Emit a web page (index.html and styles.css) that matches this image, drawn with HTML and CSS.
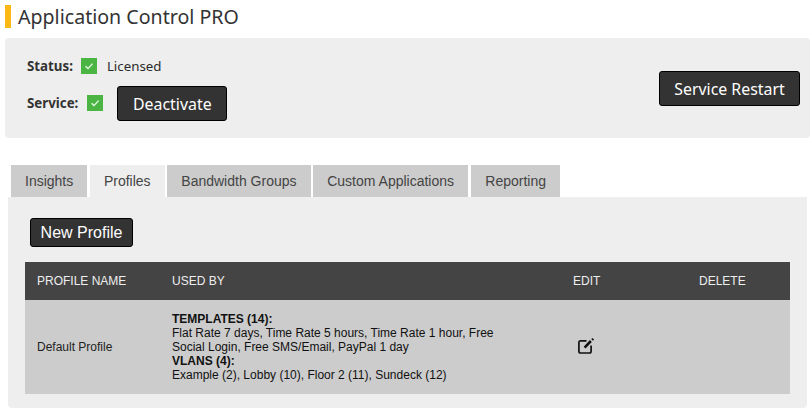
FILE: index.html
```html
<!DOCTYPE html>
<html lang="en">
<head>
<meta charset="utf-8">
<title>Application Control PRO</title>
<link rel="stylesheet" href="styles.css">
</head>
<body>
<h1 class="title">Application Control PRO</h1>
<section class="status-panel">
  <div class="status-rows">
    <div class="status-row licensed">
      <span class="label">Status:</span>
      <svg class="check" viewBox="0 0 16 16" width="16" height="16"><rect width="16" height="16" fill="#4bb543"/><path d="M4.5 8.2 7 10.6 11.6 5.6" fill="none" stroke="#e8f6e6" stroke-width="1.4"/></svg>
      <span class="value">Licensed</span>
    </div>
    <div class="status-row service">
      <span class="label">Service:</span>
      <svg class="check" viewBox="0 0 16 16" width="16" height="16"><rect width="16" height="16" fill="#4bb543"/><path d="M4.5 8.2 7 10.6 11.6 5.6" fill="none" stroke="#e8f6e6" stroke-width="1.4"/></svg>
      <button class="btn btn-large deactivate">Deactivate</button>
    </div>
  </div>
  <button class="btn btn-large">Service Restart</button>
</section>
<nav class="tabs">
  <a class="tab">Insights</a>
  <a class="tab active">Profiles</a>
  <a class="tab">Bandwidth Groups</a>
  <a class="tab">Custom Applications</a>
  <a class="tab">Reporting</a>
</nav>
<section class="tab-panel">
  <button class="btn btn-new">New Profile</button>
  <table class="profiles">
    <colgroup><col class="c1"><col class="c2"><col class="c3"><col class="c4"></colgroup>
    <thead>
      <tr><th>PROFILE NAME</th><th>USED BY</th><th>EDIT</th><th>DELETE</th></tr>
    </thead>
    <tbody>
      <tr>
        <td>Default Profile</td>
        <td class="used">
          <b>TEMPLATES (14):</b><br>
          Flat Rate 7 days, Time Rate 5 hours, Time Rate 1 hour, Free<br>
          Social Login, Free SMS/Email, PayPal 1 day<br>
          <b>VLANS (4):</b><br>
          Example (2), Lobby (10), Floor 2 (11), Sundeck (12)
        </td>
        <td class="edit">
          <svg class="edit-icon" viewBox="0 0 16 16" width="16" height="16" fill="none" stroke="#111"><path d="M8.5 2.8H2.6Q.9 2.8 .9 4.5V13.3Q.9 15 2.6 15H11.4Q13.1 15 13.1 13.3V7.5" stroke-width="1.7"/><path d="M6.6 9.6 12.9 3" stroke-width="2.6"/><path d="M14.1 1.9 15.2 .8" stroke-width="2.4"/></svg>
        </td>
        <td></td>
      </tr>
    </tbody>
  </table>
</section>
</body>
</html>
```
FILE: styles.css
```css
* { box-sizing: border-box; }
html, body { margin: 0; padding: 0; }
body {
  width: 812px;
  height: 413px;
  overflow: hidden;
  background: #fff;
  font-family: "Liberation Sans", Arial, sans-serif;
  color: #333;
}
.title {
  margin: 5px 0 10px 5px;
  height: 23px;
  border-left: 6px solid #fdb813;
  padding-left: 7px;
  font: 400 19.6px/23px "Noto Sans", sans-serif;
  color: #333;
}
.status-panel {
  margin: 0 5px;
  width: 805px;
  height: 100px;
  padding: 0 10px 0 22px;
  background: #eee;
  border-radius: 4px;
  display: flex;
  align-items: center;
  justify-content: space-between;
  font: 13.3px/20px "Noto Sans", sans-serif;
}
.status-rows { display: flex; flex-direction: column; gap: 10px; }
.status-row { display: flex; align-items: center; }
.label { font-weight: 700; margin-right: 9px; color: #333; }
.licensed .label { margin-right: 8px; }
.value { color: #2b2b2b; }
.check { margin-right: 10px; flex: none; }
.service .check { margin-right: 14px; }
.btn {
  background: #333;
  color: #fff;
  border: 1px solid #000;
  border-radius: 3px;
  padding: 0;
  cursor: pointer;
}
.btn-large {
  height: 35px;
  width: 141px;
  padding-top: 1px;
  font: 15.9px/32px "Noto Sans", sans-serif;
}
.deactivate { width: 110px; }
.tabs {
  margin: 27px 0 0 11px;
  display: flex;
  gap: 2.7px;
  height: 32px;
}
.tab {
  height: 32px;
  padding: 0 14px;
  background: #ccc;
  font-size: 14px;
  line-height: 32px;
  color: #444;
}
.tab.active { background: #eee; }
.tab:last-child { margin-left: 0.6px; }
.tab-panel {
  margin-left: 8px;
  width: 799px;
  height: 211px;
  padding: 21px 17px 0;
  background: #eee;
  border-radius: 0 0 4px 4px;
}
.btn-new {
  display: block;
  margin-left: 5px;
  width: 103px;
  height: 29px;
  font-size: 16px;
  line-height: 27px;
  font-family: "Liberation Sans", sans-serif;
}
.profiles {
  margin-top: 15px;
  width: 765px;
  border-collapse: collapse;
  table-layout: fixed;
  font-size: 12px;
}
.c1 { width: 135px; }
.c2 { width: 401px; }
.c3 { width: 126px; }
.c4 { width: 103px; }
.profiles th {
  height: 38px;
  padding: 0 12px;
  background: #444;
  color: #eee;
  font-weight: 400;
  text-align: left;
}
.profiles td {
  height: 94px;
  padding: 0 12px;
  background: #ccc;
  color: #222;
  vertical-align: middle;
  line-height: 14px;
}
.profiles td.used { padding-right: 60px; color: #111; }
.profiles td.edit { padding-left: 17px; padding-bottom: 2px; line-height: 0; }
```
